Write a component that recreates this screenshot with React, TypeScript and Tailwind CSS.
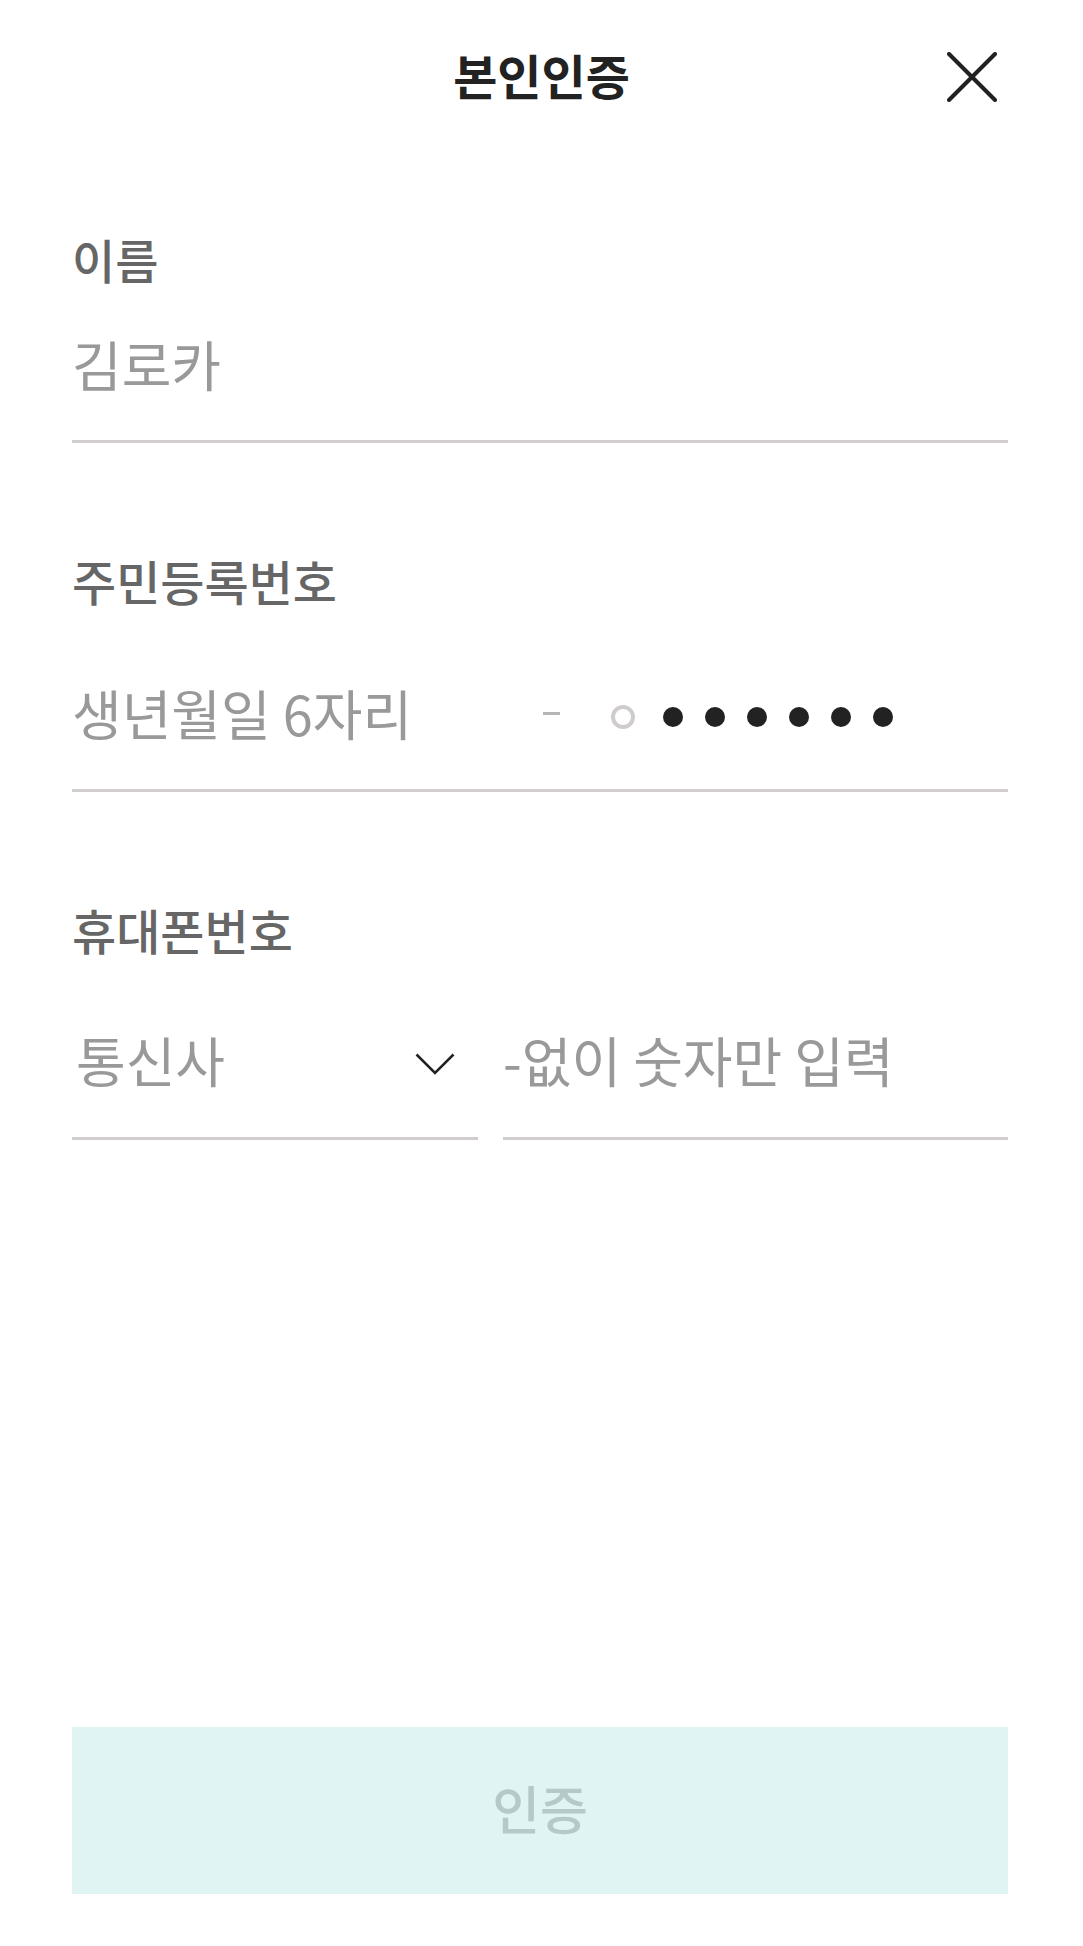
import React from "react";

export default function App() {
  const font = "font-['Noto_Sans_CJK_KR','Noto_Sans',sans-serif]";
  return (
    <div className={`${font} relative min-h-screen w-full bg-white flex flex-col`}>
      {/* Header */}
      <header className="relative h-[152px] flex items-center justify-center">
        <h1 className="text-[48px] leading-[48px] font-bold text-[#222] -mt-[5px]">본인인증</h1>
        <button className="absolute right-[86px] top-[52px] w-[50px] h-[50px]" aria-label="닫기">
          <svg width="50" height="50" viewBox="0 0 50 50" fill="none">
            <line x1="2" y1="2" x2="48" y2="48" stroke="#222" strokeWidth="4" strokeLinecap="round" />
            <line x1="48" y1="2" x2="2" y2="48" stroke="#222" strokeWidth="4" strokeLinecap="round" />
          </svg>
        </button>
      </header>

      <main className="pl-[72px] pr-[75px] flex flex-col flex-1">
        {/* 이름 */}
        <div className="mt-[85px] h-[44px] text-[47px] leading-[44px] font-medium text-[#666]">이름</div>
        <div className="mt-[7px] h-[155px] border-b-[3px] border-[#d1cdcd] flex items-center">
          <span className="text-[54px] leading-[50px] text-[#999]">김로카</span>
        </div>

        {/* 주민등록번호 */}
        <div className="mt-[115px] h-[44px] text-[48px] leading-[44px] font-medium text-[#666]">주민등록번호</div>
        <div className="mt-[37px] h-[153px] border-b-[3px] border-[#d1cdcd] flex items-center">
          <div className="w-[471px] shrink-0">
            <span className="text-[54px] leading-[50px] text-[#999]">생년월일 6자리</span>
          </div>
          <span className="w-[17px] h-[3px] bg-[#b5b5b5] shrink-0 -mt-[2px]" />
          <span className="ml-[51px] w-[24px] h-[24px] rounded-full border-[4px] border-[#d0cccc] shrink-0 mt-[6px]" />
          <div className="ml-[28px] flex gap-[22px] mt-[6px]">
            <span className="w-[20px] h-[20px] rounded-full bg-[#222]" />
            <span className="w-[20px] h-[20px] rounded-full bg-[#222]" />
            <span className="w-[20px] h-[20px] rounded-full bg-[#222]" />
            <span className="w-[20px] h-[20px] rounded-full bg-[#222]" />
            <span className="w-[20px] h-[20px] rounded-full bg-[#222]" />
            <span className="w-[20px] h-[20px] rounded-full bg-[#222]" />
          </div>
        </div>

        {/* 휴대폰번호 */}
        <div className="mt-[115px] h-[44px] text-[48px] leading-[44px] font-medium text-[#666]">휴대폰번호</div>
        <div className="mt-[32px] flex gap-[25px]">
          <div className="w-[406px] h-[157px] border-b-[3px] border-[#d1cdcd] flex items-center justify-between pl-[4px] pr-[23px]">
            <span className="text-[54px] leading-[50px] text-[#999]">통신사</span>
            <svg width="40" height="22" viewBox="0 0 40 22" fill="none" className="mt-[8px]">
              <polyline points="1.5,1.5 20,20 38.5,1.5" stroke="#222" strokeWidth="2.5" fill="none" />
            </svg>
          </div>
          <div className="flex-1 h-[157px] border-b-[3px] border-[#d1cdcd] flex items-center">
            <span className="text-[54px] leading-[50px] text-[#999]">-없이 숫자만 입력</span>
          </div>
        </div>

        {/* Button */}
        <button className="mt-auto mb-[52px] h-[167px] w-full bg-[#e0f4f4] flex items-center justify-center">
          <span className="text-[52px] leading-[48px] font-medium text-[#b4c9c9] -mt-[6px]">인증</span>
        </button>
      </main>
    </div>
  );
}
